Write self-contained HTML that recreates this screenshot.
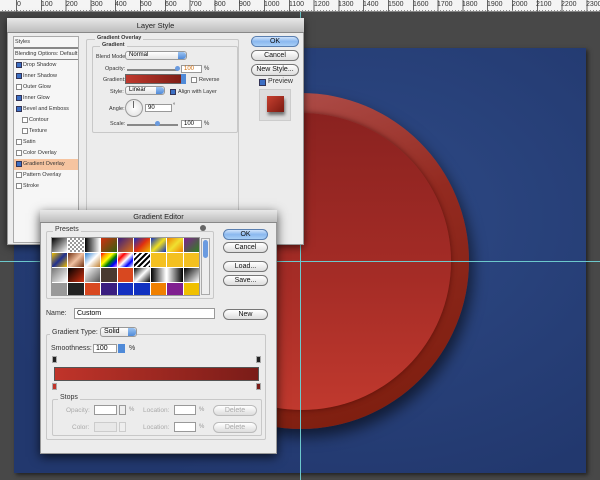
<!DOCTYPE html>
<html><head><style>
*{margin:0;padding:0;box-sizing:border-box}
body{width:600px;height:480px;overflow:hidden;background:#484848;font-family:"Liberation Sans",sans-serif;position:relative}
.a{position:absolute}
.t{position:absolute;font-size:6px;color:#333;white-space:nowrap}
.btn{position:absolute;border:1px solid #777;border-radius:6px;background:linear-gradient(#fff,#ddd);font-size:7px;text-align:center;color:#111}
.blue{background:linear-gradient(#cfe3fb,#8ab8ef 50%,#a9cff6);border-color:#5a7fb0}
.cb{position:absolute;width:6px;height:6px;border:1px solid #888;background:#fff}
.ck{background:#3c6fc4;border-color:#335}
.fld{position:absolute;background:#fff;border:1px solid #999;font-size:6px;padding-left:2px;line-height:7px}
.sel{position:absolute;border:1px solid #999;border-radius:3px;background:linear-gradient(#fff,#e4e4e4);font-size:6px;padding-left:3px;line-height:7px}
.sel:after{content:"";position:absolute;right:0;top:0;bottom:0;width:8px;background:linear-gradient(#9cc4f2,#4f8ad8);border-radius:0 3px 3px 0}
.grp{position:absolute;border:1px solid #c8c8c8;border-radius:2px}
</style></head><body>
<!-- ruler -->
<div class="a" style="left:0;top:0;width:600px;height:12px;background:#f4f4f4;border-bottom:1px solid #888"></div>
<div class="a" style="left:16px;top:0;width:600px;height:12px;background:repeating-linear-gradient(90deg,#666 0 1px,transparent 1px 24.8px);"></div>
<div class="a" style="left:0;top:10px;width:600px;height:2px;background:repeating-linear-gradient(90deg,transparent 0 2px,#888 2px 3px)"></div>
<div class="a" style="left:14px;top:0;white-space:nowrap">
<span class="t" style="left:3px;top:1px;font-size:7px">0</span><span class="t" style="left:27px;top:1px;font-size:7px">100</span><span class="t" style="left:52px;top:1px;font-size:7px">200</span><span class="t" style="left:77px;top:1px;font-size:7px">300</span><span class="t" style="left:101px;top:1px;font-size:7px">400</span><span class="t" style="left:126px;top:1px;font-size:7px">500</span><span class="t" style="left:151px;top:1px;font-size:7px">600</span><span class="t" style="left:176px;top:1px;font-size:7px">700</span><span class="t" style="left:200px;top:1px;font-size:7px">800</span><span class="t" style="left:225px;top:1px;font-size:7px">900</span><span class="t" style="left:250px;top:1px;font-size:7px">1000</span><span class="t" style="left:275px;top:1px;font-size:7px">1100</span><span class="t" style="left:300px;top:1px;font-size:7px">1200</span><span class="t" style="left:324px;top:1px;font-size:7px">1300</span><span class="t" style="left:349px;top:1px;font-size:7px">1400</span><span class="t" style="left:374px;top:1px;font-size:7px">1500</span><span class="t" style="left:399px;top:1px;font-size:7px">1600</span><span class="t" style="left:423px;top:1px;font-size:7px">1700</span><span class="t" style="left:448px;top:1px;font-size:7px">1800</span><span class="t" style="left:473px;top:1px;font-size:7px">1900</span><span class="t" style="left:498px;top:1px;font-size:7px">2000</span><span class="t" style="left:522px;top:1px;font-size:7px">2100</span><span class="t" style="left:547px;top:1px;font-size:7px">2200</span><span class="t" style="left:572px;top:1px;font-size:7px">2300</span></div>
<!-- canvas -->
<div class="a" style="left:14px;top:48px;width:572px;height:425px;background:radial-gradient(ellipse at 60% 40%,#2e4a86,#22386e 80%);box-shadow:2px 2px 4px #222"></div>
<!-- circle -->
<div class="a" style="left:133px;top:93px;width:336px;height:336px;border-radius:50%;background:linear-gradient(160deg,#b85a58,#932a20 45%,#7a1c0c);box-shadow:4px 8px 14px rgba(0,0,0,.55)"></div>
<div class="a" style="left:153px;top:113px;width:298px;height:297px;border-radius:50%;background:linear-gradient(#8a2220,#a52c26 55%,#c0392e);box-shadow:0 0 6px rgba(60,0,0,.6)"></div>
<!-- guides -->
<div class="a" style="left:0;top:261px;width:600px;height:1px;background:#6cc8cc"></div>
<div class="a" style="left:300px;top:12px;width:1px;height:468px;background:#6cc8cc"></div>

<!-- Layer Style -->
<div class="a" style="left:7px;top:18px;width:297px;height:227px;background:#ececec;border:1px solid #999;box-shadow:0 2px 8px rgba(0,0,0,.6)"></div>
<div class="a" style="left:7px;top:18px;width:297px;height:15px;background:linear-gradient(#e8e8e8,#bdbdbd);border-bottom:1px solid #888;font-size:7.5px;text-align:center;line-height:15px;color:#222">Layer Style</div>
<div class="a" style="left:13px;top:36px;width:66px;height:207px;background:#f6f6f6;border:1px solid #aaa"></div>
<div class="t" style="left:15px;top:39px;font-size:5.5px">Styles</div>
<div class="a" style="left:14px;top:47px;width:64px;height:2px;background:#888"></div>
<div class="t" style="left:15px;top:51px;font-size:5.5px">Blending Options: Default</div>
<div class="a" style="left:14px;top:59px;width:64px;height:1px;background:#888"></div>
<div class="a" style="left:14px;top:159px;width:64px;height:11px;background:#f6c4a0"></div>
<div class="cb ck" style="left:16px;top:62px"></div><div class="t" style="left:23px;top:62px;font-size:5.5px">Drop Shadow</div>
<div class="cb ck" style="left:16px;top:73px"></div><div class="t" style="left:23px;top:73px;font-size:5.5px">Inner Shadow</div>
<div class="cb" style="left:16px;top:84px"></div><div class="t" style="left:23px;top:84px;font-size:5.5px">Outer Glow</div>
<div class="cb ck" style="left:16px;top:95px"></div><div class="t" style="left:23px;top:95px;font-size:5.5px">Inner Glow</div>
<div class="cb ck" style="left:16px;top:106px"></div><div class="t" style="left:23px;top:106px;font-size:5.5px">Bevel and Emboss</div>
<div class="cb" style="left:22px;top:117px"></div><div class="t" style="left:29px;top:117px;font-size:5.5px">Contour</div>
<div class="cb" style="left:22px;top:128px"></div><div class="t" style="left:29px;top:128px;font-size:5.5px">Texture</div>
<div class="cb" style="left:16px;top:139px"></div><div class="t" style="left:23px;top:139px;font-size:5.5px">Satin</div>
<div class="cb" style="left:16px;top:150px"></div><div class="t" style="left:23px;top:150px;font-size:5.5px">Color Overlay</div>
<div class="cb ck" style="left:16px;top:161px"></div><div class="t" style="left:23px;top:161px;font-size:5.5px">Gradient Overlay</div>
<div class="cb" style="left:16px;top:172px"></div><div class="t" style="left:23px;top:172px;font-size:5.5px">Pattern Overlay</div>
<div class="cb" style="left:16px;top:183px"></div><div class="t" style="left:23px;top:183px;font-size:5.5px">Stroke</div>

<div class="grp" style="left:86px;top:39px;width:153px;height:200px"></div>
<div class="t" style="left:95px;top:35px;background:#ececec;padding:0 2px;font-weight:bold;font-size:5.5px">Gradient Overlay</div>
<div class="grp" style="left:92px;top:46px;width:146px;height:87px"></div>
<div class="t" style="left:100px;top:42px;background:#ececec;padding:0 2px;font-weight:bold;font-size:5.5px">Gradient</div>
<div class="t" style="left:96px;top:54px;font-size:5.5px">Blend Mode:</div>
<div class="sel" style="left:125px;top:51px;width:62px;height:9px">Normal</div>
<div class="t" style="left:105px;top:66px;font-size:5.5px">Opacity:</div>
<div class="a" style="left:127px;top:69px;width:51px;height:2px;background:#888"></div>
<div class="fld" style="left:181px;top:65px;width:21px;height:8px;color:#c60">100</div><div class="t" style="left:204px;top:66px">%</div>
<div class="t" style="left:103px;top:77px;font-size:5.5px">Gradient:</div>
<div class="a" style="left:125px;top:74px;width:61px;height:10px;border:1px solid #666;background:linear-gradient(90deg,#c0392e,#7a1c14)"></div>
<div class="a" style="left:181px;top:74px;width:5px;height:10px;background:#4f8ad8"></div>
<div class="cb" style="left:191px;top:77px"></div><div class="t" style="left:199px;top:77px;font-size:5.5px">Reverse</div>
<div class="t" style="left:110px;top:89px;font-size:5.5px">Style:</div>
<div class="sel" style="left:125px;top:86px;width:40px;height:9px">Linear</div>
<div class="cb ck" style="left:170px;top:89px"></div><div class="t" style="left:178px;top:89px;font-size:5.5px">Align with Layer</div>
<div class="t" style="left:109px;top:106px;font-size:5.5px">Angle:</div>
<div class="a" style="left:125px;top:99px;width:18px;height:18px;border-radius:50%;border:1px solid #999;background:radial-gradient(#fff,#ddd)"></div>
<div class="a" style="left:133px;top:101px;width:1px;height:7px;background:#666"></div>
<div class="fld" style="left:145px;top:104px;width:27px;height:8px">90</div><div class="t" style="left:173px;top:103px">°</div>
<div class="t" style="left:110px;top:121px;font-size:5.5px">Scale:</div>
<div class="a" style="left:127px;top:124px;width:51px;height:2px;background:#888"></div>
<div class="a" style="left:155px;top:121px;width:5px;height:5px;background:#6a9be0;border-radius:50%"></div>
<div class="a" style="left:175px;top:66px;width:5px;height:5px;background:#6a9be0;border-radius:50%"></div>
<div class="fld" style="left:181px;top:120px;width:21px;height:8px">100</div><div class="t" style="left:204px;top:121px">%</div>

<div class="btn blue" style="left:251px;top:36px;width:48px;height:11px;line-height:9px">OK</div>
<div class="btn" style="left:251px;top:50px;width:48px;height:11px;line-height:9px">Cancel</div>
<div class="btn" style="left:251px;top:64px;width:48px;height:12px;line-height:10px">New Style...</div>
<div class="cb ck" style="left:259px;top:79px;width:7px;height:7px"></div><div class="t" style="left:268px;top:78px;font-size:7px">Preview</div>
<div class="a" style="left:259px;top:89px;width:32px;height:32px;background:#ddd;border:1px solid #ccc"></div>
<div class="a" style="left:267px;top:96px;width:17px;height:16px;background:linear-gradient(135deg,#c84030,#7a1a10);box-shadow:1px 3px 3px rgba(0,0,0,.5)"></div>

<!-- Gradient Editor -->
<div class="a" style="left:40px;top:210px;width:237px;height:244px;background:#ececec;border:1px solid #999;box-shadow:0 3px 10px rgba(0,0,0,.7)"></div>
<div class="a" style="left:40px;top:210px;width:237px;height:13px;background:linear-gradient(#e8e8e8,#bdbdbd);border-bottom:1px solid #888;font-size:7.5px;text-align:center;line-height:13px;color:#222">Gradient Editor</div>
<div class="grp" style="left:46px;top:231px;width:168px;height:68px"></div>
<div class="t" style="left:53px;top:226px;background:#ececec;padding:0 2px;font-size:7px">Presets</div>
<div class="a" style="left:200px;top:225px;width:6px;height:6px;border-radius:50%;background:#666"></div>
<div class="a" style="left:51px;top:237px;width:149px;height:59px;background:#fff;border:1px solid #999;display:grid;grid-template-columns:repeat(9,1fr);grid-template-rows:14px 14px 14px 14px;gap:1px;overflow:hidden">
<div style="background:linear-gradient(135deg,#000,#fff)"></div><div style="background:repeating-conic-gradient(#999 0 25%,#fff 0 50%) 0 0/4px 4px"></div><div style="background:linear-gradient(90deg,#000,#fff)"></div><div style="background:linear-gradient(135deg,#d03010,#306010)"></div><div style="background:linear-gradient(135deg,#3a1e80,#e07010)"></div><div style="background:linear-gradient(135deg,#1530c0,#e03010,#f0c000)"></div><div style="background:linear-gradient(135deg,#1030c0,#f0e020,#1030c0)"></div><div style="background:linear-gradient(135deg,#f08000,#f0e030,#f08000)"></div><div style="background:linear-gradient(135deg,#802090,#308020)"></div>
<div style="background:linear-gradient(135deg,#f0c000,#203090,#f0c000)"></div><div style="background:linear-gradient(135deg,#703010,#f0c0a0,#703010)"></div><div style="background:linear-gradient(135deg,#3080d0,#fff,#c08030)"></div><div style="background:linear-gradient(135deg,red,orange,yellow,green,blue,violet)"></div><div style="background:linear-gradient(135deg,#fff,red,#fff,blue,#fff)"></div><div style="background:repeating-linear-gradient(135deg,#000 0 2px,#fff 2px 4px)"></div><div style="background:#f4c020"></div><div style="background:#f4c020"></div><div style="background:#f4c020"></div>
<div style="background:linear-gradient(135deg,#777,#fff)"></div><div style="background:linear-gradient(135deg,#000,#d03010)"></div><div style="background:linear-gradient(135deg,#fff,#555)"></div><div style="background:#4a3a30"></div><div style="background:#d84820"></div><div style="background:linear-gradient(135deg,#000,#fff,#000)"></div><div style="background:linear-gradient(90deg,#000,#fff)"></div><div style="background:linear-gradient(90deg,#fff,#000)"></div><div style="background:linear-gradient(135deg,#000,#fff)"></div>
<div style="background:#999"></div><div style="background:#222"></div><div style="background:#d84820"></div><div style="background:#3a1e80"></div><div style="background:#1530c0"></div><div style="background:#1030c0"></div><div style="background:#f08000"></div><div style="background:#802090"></div><div style="background:#f0c000"></div></div>
<div class="a" style="left:201px;top:238px;width:9px;height:57px;background:#eee;border:1px solid #aaa"></div>
<div class="a" style="left:203px;top:240px;width:5px;height:18px;background:#6a9be0;border-radius:3px"></div>
<div class="btn blue" style="left:223px;top:229px;width:45px;height:11px;line-height:9px">OK</div>
<div class="btn" style="left:223px;top:242px;width:45px;height:11px;line-height:9px">Cancel</div>
<div class="btn" style="left:223px;top:261px;width:45px;height:11px;line-height:9px">Load...</div>
<div class="btn" style="left:223px;top:275px;width:45px;height:11px;line-height:9px">Save...</div>
<div class="t" style="left:46px;top:310px;font-size:7px">Name:</div>
<div class="fld" style="left:74px;top:308px;width:141px;height:11px;font-size:7px;line-height:9px">Custom</div>
<div class="btn" style="left:223px;top:309px;width:45px;height:11px;line-height:9px">New</div>
<div class="grp" style="left:46px;top:334px;width:220px;height:106px"></div>
<div class="t" style="left:50px;top:329px;background:#ececec;padding:0 2px;font-size:7px">Gradient Type:</div>
<div class="sel" style="left:100px;top:327px;width:37px;height:10px;font-size:7px;line-height:8px">Solid</div>
<div class="t" style="left:51px;top:345px;font-size:7px">Smoothness:</div>
<div class="fld" style="left:93px;top:344px;width:24px;height:9px;font-size:7px">100</div>
<div class="a" style="left:118px;top:344px;width:7px;height:9px;background:#4f8ad8"></div>
<div class="t" style="left:129px;top:345px;font-size:7px">%</div>
<div class="a" style="left:52px;top:356px;width:5px;height:7px;background:#222;border:1px solid #aaa"></div>
<div class="a" style="left:256px;top:356px;width:5px;height:7px;background:#222;border:1px solid #aaa"></div>
<div class="a" style="left:54px;top:367px;width:205px;height:14px;border:1px solid #555;background:linear-gradient(90deg,#c0342a,#7a1c18)"></div>
<div class="a" style="left:52px;top:383px;width:5px;height:7px;background:#c0342a;border:1px solid #aaa"></div>
<div class="a" style="left:256px;top:383px;width:5px;height:7px;background:#7a1c18;border:1px solid #aaa"></div>
<div class="grp" style="left:52px;top:399px;width:210px;height:37px"></div>
<div class="t" style="left:58px;top:394px;background:#ececec;padding:0 2px;font-size:7px">Stops</div>
<div class="t" style="left:66px;top:407px;font-size:6.5px;color:#aaa">Opacity:</div>
<div class="fld" style="left:94px;top:405px;width:23px;height:10px"></div><div class="fld" style="left:119px;top:405px;width:7px;height:10px;background:#eee"></div><div class="t" style="left:129px;top:407px;color:#999">%</div>
<div class="t" style="left:143px;top:407px;font-size:6.5px;color:#aaa">Location:</div>
<div class="fld" style="left:174px;top:405px;width:22px;height:10px"></div><div class="t" style="left:199px;top:407px;color:#999">%</div>
<div class="btn" style="left:213px;top:405px;width:44px;height:11px;line-height:9px;color:#aaa;border-color:#bbb">Delete</div>
<div class="t" style="left:72px;top:424px;font-size:6.5px;color:#aaa">Color:</div>
<div class="fld" style="left:94px;top:422px;width:23px;height:10px;background:#e8e8e8;border-color:#ccc"></div><div class="fld" style="left:119px;top:422px;width:7px;height:10px;background:#eee;border-color:#ccc"></div>
<div class="t" style="left:143px;top:424px;font-size:6.5px;color:#aaa">Location:</div>
<div class="fld" style="left:174px;top:422px;width:22px;height:10px"></div><div class="t" style="left:199px;top:424px;color:#999">%</div>
<div class="btn" style="left:213px;top:422px;width:44px;height:11px;line-height:9px;color:#aaa;border-color:#bbb">Delete</div>
</body></html>
